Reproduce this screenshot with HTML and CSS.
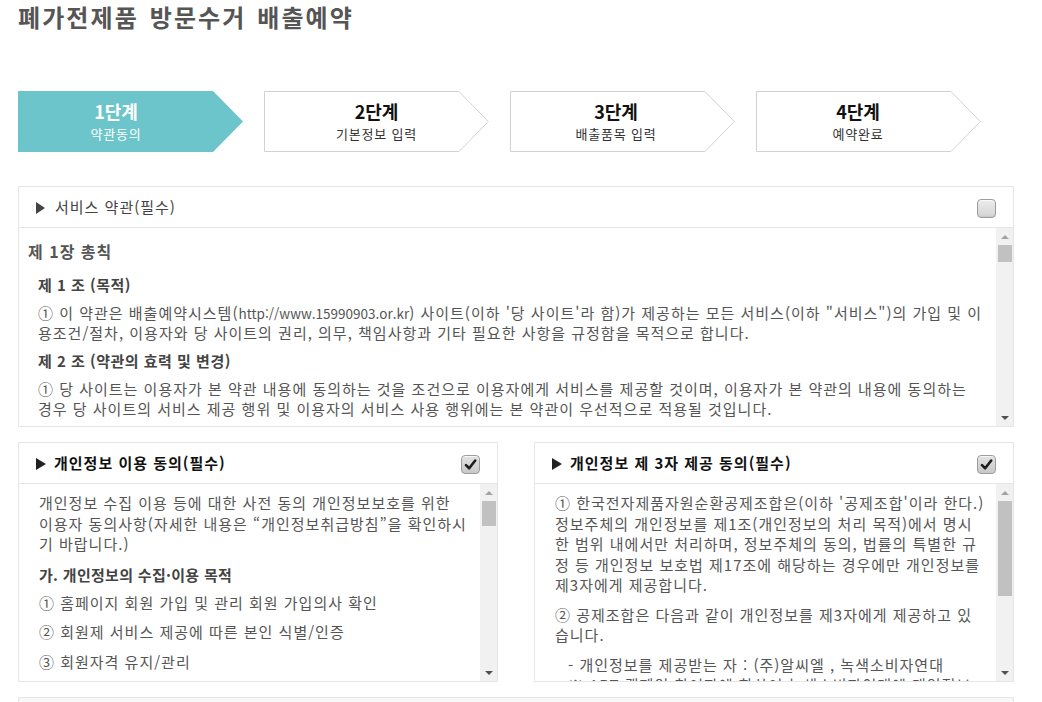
FILE: index.html
```html
<!DOCTYPE html>
<html lang="ko">
<head>
<meta charset="utf-8">
<title>폐가전제품 방문수거 배출예약</title>
<link rel="stylesheet" href="styles.css">
</head>
<body>
<div class="page">
  <h1 class="page-title">폐가전제품 방문수거 배출예약</h1>

  <ol class="steps">
    <li class="step step--active step--1">
      <svg class="step-shape" viewBox="0 0 225 61"><polygon points="0,0 195,0 225,30.5 195,61 0,61"/></svg>
      <div class="step-label"><strong>1단계</strong><span>약관동의</span></div>
    </li>
    <li class="step step--2">
      <svg class="step-shape" viewBox="0 0 225 61"><polygon points="0.5,0.5 195,0.5 224.3,30.5 195,60.5 0.5,60.5"/></svg>
      <div class="step-label"><strong>2단계</strong><span>기본정보 입력</span></div>
    </li>
    <li class="step step--3">
      <svg class="step-shape" viewBox="0 0 225 61"><polygon points="0.5,0.5 195,0.5 224.3,30.5 195,60.5 0.5,60.5"/></svg>
      <div class="step-label"><strong>3단계</strong><span>배출품목 입력</span></div>
    </li>
    <li class="step step--4">
      <svg class="step-shape" viewBox="0 0 225 61"><polygon points="0.5,0.5 195,0.5 224.3,30.5 195,60.5 0.5,60.5"/></svg>
      <div class="step-label"><strong>4단계</strong><span>예약완료</span></div>
    </li>
  </ol>

  <section class="panel panel--terms">
    <header class="panel-head">
      <h2 class="panel-title panel-title--light"><i class="tri"></i>서비스 약관(필수)</h2>
      <span class="chk"></span>
    </header>
    <div class="panel-body">
      <div class="panel-text terms">
        <h3 class="terms-chapter">제 1장 총칙</h3>
        <h4 class="terms-article">제 1 조 (목적)</h4>
        <p class="terms-para">① 이 약관은 배출예약시스템(<span class="latin">http://www.15990903.or.kr</span>) 사이트(이하 '당 사이트'라 함)가 제공하는 모든 서비스(이하 "서비스")의 가입 및 이<br>용조건/절차, 이용자와 당 사이트의 권리, 의무, 책임사항과 기타 필요한 사항을 규정함을 목적으로 합니다.</p>
        <h4 class="terms-article">제 2 조 (약관의 효력 및 변경)</h4>
        <p class="terms-para">① 당 사이트는 이용자가 본 약관 내용에 동의하는 것을 조건으로 이용자에게 서비스를 제공할 것이며, 이용자가 본 약관의 내용에 동의하는<br>경우 당 사이트의 서비스 제공 행위 및 이용자의 서비스 사용 행위에는 본 약관이 우선적으로 적용될 것입니다.</p>
      </div>
      <div class="sbar">
        <span class="sbar-btn sbar-btn--up"></span>
        <div class="sbar-track"><span class="sbar-thumb" style="height:17px"></span></div>
        <span class="sbar-btn sbar-btn--down"></span>
      </div>
    </div>
  </section>

  <div class="agree-row">
    <section class="panel panel--half">
      <header class="panel-head">
        <h2 class="panel-title"><i class="tri"></i>개인정보 이용 동의(필수)</h2>
        <span class="chk chk--on"><svg viewBox="0 0 18 18"><path d="M4.2 9.6 L7.6 13 L14 4.8"/></svg></span>
      </header>
      <div class="panel-body">
        <div class="panel-text agree">
          <p class="agree-para agree-para--lead">개인정보 수집 이용 등에 대한 사전 동의 개인정보보호를 위한<br>이용자 동의사항(자세한 내용은 “개인정보취급방침”을 확인하시<br>기 바랍니다.)</p>
          <h4 class="agree-sub">가. 개인정보의 수집·이용 목적</h4>
          <p class="agree-para">① 홈페이지 회원 가입 및 관리 회원 가입의사 확인</p>
          <p class="agree-para">② 회원제 서비스 제공에 따른 본인 식별/인증</p>
          <p class="agree-para">③ 회원자격 유지/관리</p>
        </div>
        <div class="sbar">
          <span class="sbar-btn sbar-btn--up"></span>
          <div class="sbar-track"><span class="sbar-thumb" style="height:25px"></span></div>
          <span class="sbar-btn sbar-btn--down"></span>
        </div>
      </div>
    </section>

    <section class="panel panel--half">
      <header class="panel-head">
        <h2 class="panel-title"><i class="tri"></i>개인정보 제 3자 제공 동의(필수)</h2>
        <span class="chk chk--on"><svg viewBox="0 0 18 18"><path d="M4.2 9.6 L7.6 13 L14 4.8"/></svg></span>
      </header>
      <div class="panel-body">
        <div class="panel-text agree">
          <p class="agree-para">① 한국전자제품자원순환공제조합은(이하 '공제조합'이라 한다.)<br>정보주체의 개인정보를 제1조(개인정보의 처리 목적)에서 명시<br>한 범위 내에서만 처리하며, 정보주체의 동의, 법률의 특별한 규<br>정 등 개인정보 보호법 제17조에 해당하는 경우에만 개인정보를<br>제3자에게 제공합니다.</p>
          <p class="agree-para">② 공제조합은 다음과 같이 개인정보를 제3자에게 제공하고 있<br>습니다.</p>
          <ul class="agree-list">
            <li>- 개인정보를 제공받는 자 : (주)알씨엘 , 녹색소비자연대</li>
            <li>※ ART 캠페인 참여자에 한하여 녹색소비자연대에 개인정보</li>
          </ul>
        </div>
        <div class="sbar">
          <span class="sbar-btn sbar-btn--up"></span>
          <div class="sbar-track"><span class="sbar-thumb" style="height:95px"></span></div>
          <span class="sbar-btn sbar-btn--down"></span>
        </div>
      </div>
    </section>
  </div>

  <section class="panel panel--next">
    <header class="panel-head panel-head--gray"></header>
  </section>
</div>
</body>
</html>
```

FILE: styles.css
```css
* {
  box-sizing: border-box;
  margin: 0;
  padding: 0;
}

html, body {
  background: #fff;
  overflow: hidden;
}

body {
  font-family: "Noto Sans CJK KR", "Malgun Gothic", sans-serif;
  color: #555;
}

.page {
  width: 1014px;
  height: 702px;
  overflow: hidden;
  padding-left: 18px;
}

/* Title */
.page-title {
  font-size: 24px;
  font-weight: 700;
  line-height: 34px;
  color: #555;
  letter-spacing: 2.1px;
  word-spacing: 2px;
}

/* Steps */
.steps {
  display: flex;
  gap: 21px;
  list-style: none;
  margin-top: 57px;
}

.step {
  position: relative;
  width: 225px;
  height: 61px;
}

.step-shape {
  position: absolute;
  left: 0;
  top: 0;
  width: 225px;
  height: 61px;
}

.step-shape polygon {
  fill: #fff;
  stroke: #d2d2d2;
  stroke-width: 1;
}

.step--active .step-shape polygon {
  fill: #6cc5ca;
  stroke: none;
}

.step-label {
  position: relative;
  display: flex;
  flex-direction: column;
  align-items: center;
  height: 61px;
  padding-top: 8px;
  color: #333;
}

.step-label strong {
  font-size: 18px;
  font-weight: 700;
  line-height: 24px;
  color: #111;
}

.step-label span {
  font-size: 13px;
  line-height: 20px;
  margin-top: 1px;
  letter-spacing: 0.8px;
}

.step--active .step-label,
.step--active .step-label strong {
  color: #fff;
}

.step--1 .step-label { padding-right: 29px; }
.step--3 .step-label { padding-right: 13px; }
.step--4 .step-label { padding-right: 21px; }

/* Panels */
.panel {
  border: 1px solid #e6e6e6;
  background: #fff;
}

.panel--terms {
  margin-top: 34px;
  width: 996px;
}

.panel-head {
  display: flex;
  align-items: center;
  justify-content: space-between;
  height: 41px;
  border-bottom: 1px solid #e6e6e6;
  padding: 0 17px 0 17px;
}

.panel-head--gray {
  background: #f7f7f7;
}

.panel-title {
  display: flex;
  align-items: center;
  font-size: 15px;
  font-weight: 700;
  color: #111;
  line-height: 20px;
  letter-spacing: 1px;
}

.panel-title--light {
  font-weight: 400;
  color: #444;
}

.tri {
  display: inline-block;
  width: 0;
  height: 0;
  border-top: 6px solid transparent;
  border-bottom: 6px solid transparent;
  border-left: 10px solid #222;
  margin-right: 8px;
  margin-top: 1px;
}

.panel-title--light .tri {
  border-left-color: #444;
  border-left-width: 9px;
  margin-right: 10px;
}

/* Checkbox */
.chk {
  display: block;
  width: 19px;
  height: 19px;
  border: 1px solid #9d9d9d;
  border-radius: 4px;
  background: linear-gradient(#ececec, #d4d4d4);
  box-shadow: inset 0 1px 0 #f7f7f7, inset 0 -1px 1px #c8c8c8;
  margin-top: 3px;
}

.chk--on {
  background: linear-gradient(#e2e2e2, #c9c9c9);
}

.chk svg {
  display: block;
  width: 17px;
  height: 17px;
}

.chk svg path {
  fill: none;
  stroke: #1e1e1e;
  stroke-width: 2.8;
  stroke-linecap: round;
  stroke-linejoin: round;
}

.panel-body {
  display: flex;
  height: 198px;
}

.panel-text {
  flex: 1;
  overflow: hidden;
  min-width: 0;
}

/* Scrollbar */
.sbar {
  display: flex;
  flex-direction: column;
  width: 17px;
  background: #f1f1f1;
}

.sbar-btn {
  display: flex;
  align-items: center;
  justify-content: center;
  height: 17px;
}

.sbar-btn::before {
  content: "";
  width: 0;
  height: 0;
  border-left: 4px solid transparent;
  border-right: 4px solid transparent;
}

.sbar-btn--up::before {
  border-bottom: 4px solid #a3a3a3;
}

.sbar-btn--down::before {
  border-top: 4px solid #505050;
}

.sbar-track {
  flex: 1;
}

.sbar-thumb {
  display: block;
  margin: 0 1px 0 2px;
  background: #c1c1c1;
}

/* Terms text */
.terms {
  padding: 13px 10px 0 9px;
}

.terms-chapter {
  font-size: 16px;
  font-weight: 700;
  line-height: 20px;
  color: #555;
  letter-spacing: 1px;
  margin-bottom: 14px;
}

.terms-article {
  font-size: 15px;
  font-weight: 700;
  line-height: 20px;
  color: #444;
  letter-spacing: 0.5px;
  margin: 0 0 8px 10px;
}

.terms-para {
  font-size: 15px;
  line-height: 20px;
  color: #555;
  letter-spacing: 1px;
  margin: 0 0 8px 10px;
  white-space: nowrap;
}

.latin {
  font-size: 13.5px;
  letter-spacing: 0;
}

/* Agreement panels */
.agree-row {
  display: flex;
  gap: 36px;
  margin-top: 15px;
  width: 996px;
}

.panel--half {
  width: 480px;
}

.panel--half .panel-body {
  height: 197px;
}

.agree {
  padding: 9px 6px 0 20px;
}

.agree-para {
  font-size: 15px;
  line-height: 20.5px;
  color: #555;
  letter-spacing: 1px;
  margin-bottom: 9px;
  white-space: nowrap;
}

.agree-para--lead {
  margin-bottom: 10px;
}

.agree-sub {
  font-size: 15px;
  font-weight: 700;
  line-height: 20px;
  color: #444;
  letter-spacing: 0.3px;
  margin-bottom: 8px;
}

.agree-list {
  list-style: none;
  padding-left: 13px;
  font-size: 15px;
  line-height: 20.5px;
  color: #555;
  letter-spacing: 1px;
  white-space: nowrap;
}

.panel--next {
  margin-top: 15px;
  width: 996px;
}
```
